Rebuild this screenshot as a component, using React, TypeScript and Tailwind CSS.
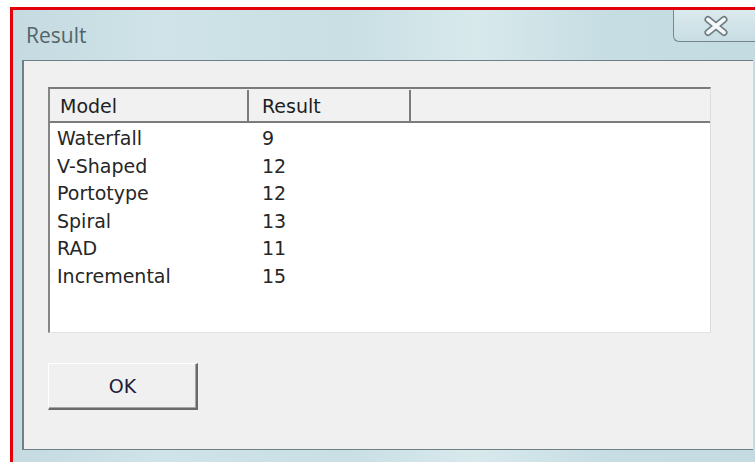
const rows: [string, string][] = [
  ["Waterfall", "9"],
  ["V-Shaped", "12"],
  ["Portotype", "12"],
  ["Spiral", "13"],
  ["RAD", "11"],
  ["Incremental", "15"],
];

const uiFont = "font-['DejaVu_Sans',sans-serif]";

function CloseGlyph() {
  return (
    <svg width="28" height="22" viewBox="0 0 28 22">
      <path d="M6 4.5 L22 17.5 M22 4.5 L6 17.5" stroke="#6c7c82" strokeWidth="7" strokeLinecap="round" fill="none" />
      <path d="M6 4.5 L22 17.5 M22 4.5 L6 17.5" stroke="#f5f9fa" strokeWidth="3.8" strokeLinecap="round" fill="none" />
    </svg>
  );
}

export default function App() {
  return (
    <div className="h-[462px] w-[755px] overflow-hidden bg-white pl-[10px] pt-[7px]">
      <div className="flex h-[455px] w-[748px] flex-col border-l-[3px] border-t-[3px] border-[#e4000a] bg-[linear-gradient(90deg,#c5dbe1_0%,#cfe3e8_20%,#c9dfe4_45%,#d8e9ec_62%,#c6dde3_80%,#c3dbe1_100%)]">
        {/* title bar */}
        <div className="flex h-[50px] shrink-0 items-start justify-between">
          <span className="ml-[13px] mt-[14px] font-['Open_Sans',sans-serif] text-[21px] leading-[22px] text-[#53646a]">
            Result
          </span>
          <div className="flex h-[32px] w-[85px] items-center justify-center rounded-bl-[6px] border-b border-l border-[#75878d] bg-[linear-gradient(180deg,#dbeaee,#c8dde3)]">
            <CloseGlyph />
          </div>
        </div>

        {/* client area */}
        <div className="ml-[9px] mr-[5px] flex h-[390px] shrink-0 flex-col border-b border-l-2 border-t border-[#6d8086] bg-[#f0f0f0] pl-[24px] pt-[26px]">
          <div className="flex h-[246px] w-[663px] flex-col border-b border-l-2 border-r border-t-2 border-b-[#e2e2e2] border-l-[#858585] border-r-[#dcdcdc] border-t-[#7b7b7b] bg-white">
            <div className={`flex h-[34px] shrink-0 border-b-2 border-[#7b7b7b] bg-[#f1f1f1] pt-[1px] text-[19px] leading-[32px] text-[#1e1e1e] ${uiFont}`}>
              <div className="w-[199px] border-r-2 border-[#7b7b7b] pl-[10px]">Model</div>
              <div className="w-[162px] border-r-2 border-[#7b7b7b] pl-[13px]">Result</div>
              <div className="flex-1" />
            </div>
            <div className={`flex flex-col pt-[2px] text-[19px] leading-[27.6px] text-[#262626] ${uiFont}`}>
              {rows.map(([model, score]) => (
                <div key={model} className="flex">
                  <div className="w-[199px] pl-[7px]">{model}</div>
                  <div className="pl-[13px]">{score}</div>
                </div>
              ))}
            </div>
          </div>

          <button
            className={`mt-[30px] h-[47px] w-[150px] border-b-2 border-l border-r-2 border-t border-b-[#6a6a6a] border-l-white border-r-[#6a6a6a] border-t-white bg-[#f0f0f0] shadow-[inset_-1px_-1px_0_#a5a5a5] text-[19px] text-[#1c1c3c] ${uiFont}`}
          >
            OK
          </button>
        </div>
      </div>
    </div>
  );
}
